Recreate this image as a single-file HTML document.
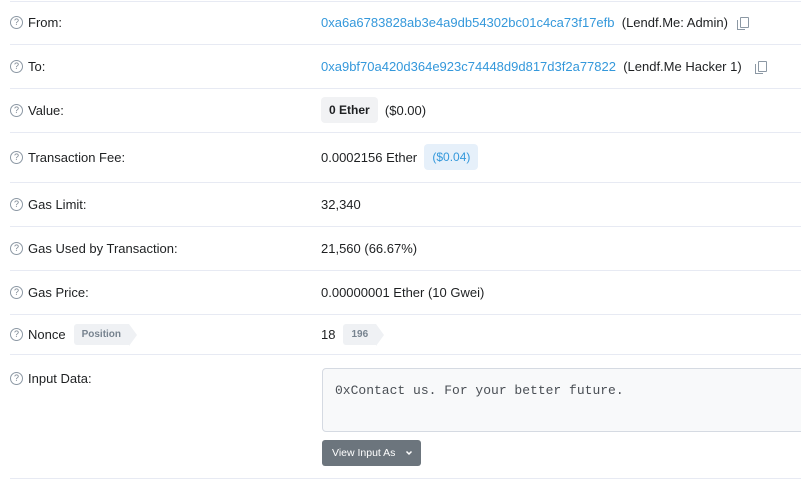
<!DOCTYPE html>
<html><head><meta charset="utf-8"><style>
*{margin:0;padding:0;box-sizing:border-box}
body{width:801px;height:481px;background:#fff;font-family:"Liberation Sans",Arial,sans-serif;font-size:13px;color:#1e2022;position:relative;overflow:hidden}
.hr{position:absolute;left:10px;right:0;height:1px;background:#e7eaf3}
.l{position:absolute;left:10px;display:flex;align-items:center;height:18px}
.q{width:13px;height:13px;border:1px solid #8c98a4;border-radius:50%;font-size:9px;color:#77838f;display:inline-flex;align-items:center;justify-content:center;margin-right:5px;line-height:1}
.v{position:absolute;left:321px;display:flex;align-items:center;height:18px;white-space:nowrap}
a{color:#3498db;text-decoration:none}
.cp{display:inline-block;width:9px;height:11px;border:1.3px solid #8c98a4;border-radius:1px;position:relative;margin-left:12px}
.cp:after{content:"";position:absolute;left:-4px;top:2px;width:7px;height:9px;border-left:1.3px solid #8c98a4;border-bottom:1.3px solid #8c98a4}
.badge{background:#f1f2f4;border-radius:4px;font-weight:bold;font-size:12px;padding:6px 8px;color:#1e2022}
.tag{position:relative;background:#eff1f4;color:#77838f;font-weight:bold;font-size:10px;padding:5px 8px;border-radius:3px 0 0 3px;margin-left:8px}
.tag:after{content:"";position:absolute;right:-8px;top:0;border-left:8px solid #eff1f4;border-top:11px solid transparent;border-bottom:11px solid transparent}
</style></head><body>
<div class="hr" style="top:1px"></div>
<div class="hr" style="top:44px"></div>
<div class="hr" style="top:88px"></div>
<div class="hr" style="top:132px"></div>
<div class="hr" style="top:182px"></div>
<div class="hr" style="top:226px"></div>
<div class="hr" style="top:270px"></div>
<div class="hr" style="top:314px"></div>
<div class="hr" style="top:354px"></div>
<div class="hr" style="top:478px"></div>

<div class="l" style="top:13px"><span class="q">?</span>From:</div>
<div class="v" style="top:13px"><a>0xa6a6783828ab3e4a9db54302bc01c4ca73f17efb</a>&nbsp;&nbsp;(Lendf.Me: Admin)<span class="cp"></span></div>

<div class="l" style="top:57px"><span class="q">?</span>To:</div>
<div class="v" style="top:57px"><a>0xa9bf70a420d364e923c74448d9d817d3f2a77822</a>&nbsp;&nbsp;(Lendf.Me Hacker 1)<span class="cp" style="margin-left:16px"></span></div>

<div class="l" style="top:101px"><span class="q">?</span>Value:</div>
<div class="v" style="top:101px"><span class="badge">0 Ether</span>&nbsp;&nbsp;($0.00)</div>

<div class="l" style="top:148px"><span class="q">?</span>Transaction Fee:</div>
<div class="v" style="top:148px">0.0002156 Ether&nbsp;&nbsp;<span class="badge" style="background:#e6f0fa;color:#3498db;font-weight:normal">($0.04)</span></div>

<div class="l" style="top:195px"><span class="q">?</span>Gas Limit:</div>
<div class="v" style="top:195px">32,340</div>

<div class="l" style="top:239px"><span class="q">?</span>Gas Used by Transaction:</div>
<div class="v" style="top:239px">21,560 (66.67%)</div>

<div class="l" style="top:283px"><span class="q">?</span>Gas Price:</div>
<div class="v" style="top:283px">0.00000001 Ether (10 Gwei)</div>

<div class="l" style="top:325px"><span class="q">?</span>Nonce<span class="tag">Position</span></div>
<div class="v" style="top:325px">18<span class="tag">196</span></div>

<div class="l" style="top:369px"><span class="q">?</span>Input Data:</div>
<div style="position:absolute;left:322px;top:368px;width:490px;height:64px;background:#f8f9fa;border:1px solid #d5dae2;border-radius:4px;font-family:'Liberation Mono',monospace;font-size:13px;color:#4a4f55;padding:14px 12px">0xContact us. For your better future.</div>
<div style="position:absolute;left:322px;top:440px;width:99px;height:26px;background:#6c757d;border-radius:3px;color:#fff;font-size:10.5px;display:flex;align-items:center;padding-left:10px">View Input As<svg width="8" height="6" style="margin-left:10px" viewBox="0 0 8 6"><path d="M1.5 1.5L4 4L6.5 1.5" stroke="#fff" stroke-width="1.5" fill="none"/></svg></div>
</body></html>
